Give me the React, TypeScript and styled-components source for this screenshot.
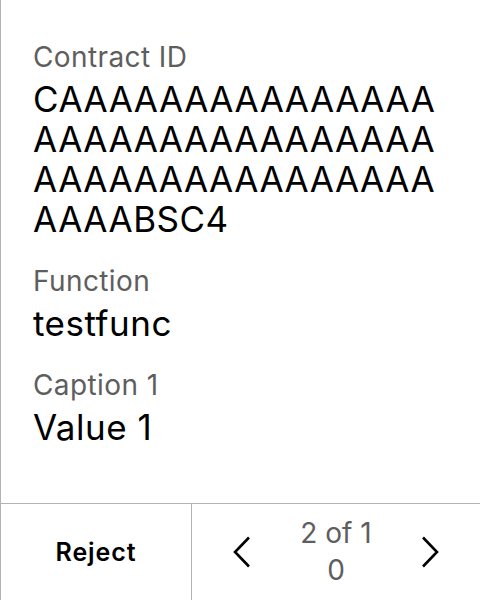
import React from "react";
import styled, { createGlobalStyle } from "styled-components";

const Global = createGlobalStyle`
  html, body { margin: 0; padding: 0; background: #ffffff; }
  body { font-family: Inter, "Noto Sans", sans-serif; }
`;

const Screen = styled.div`
  box-sizing: border-box;
  width: 480px;
  height: 600px;
  border-left: 1px solid #b3b3b3;
  display: flex;
  flex-direction: column;
  background: #ffffff;
`;

const Content = styled.div`
  flex: 1;
  padding: 40px 32px 0 32px;
  display: flex;
  flex-direction: column;
  gap: 25px;
`;

const Field = styled.div`
  display: flex;
  flex-direction: column;
  gap: 5px;
`;

const Label = styled.div`
  font-size: 28px;
  line-height: 34px;
  letter-spacing: 0.4px;
  color: #5e5e5e;
`;

const Value = styled.div`
  font-size: 35px;
  line-height: 40px;
  letter-spacing: 0.5px;
  color: #000000;
  word-break: break-all;
`;

const Footer = styled.div`
  height: 96px;
  border-top: 1px solid #b3b3b3;
  display: grid;
  grid-template-columns: 191px 1fr;
`;

const RejectButton = styled.button`
  border: none;
  background: transparent;
  border-right: 1px solid #b3b3b3;
  font-family: Inter, "Noto Sans", sans-serif;
  font-weight: 600;
  font-size: 25px;
  letter-spacing: 0.9px;
  color: #000;
  padding: 0;
`;

const Pager = styled.div`
  display: flex;
  align-items: center;
  justify-content: space-between;
  padding: 0 26px;
`;

const Arrow = styled.button`
  width: 48px;
  height: 48px;
  border: none;
  background: transparent;
  padding: 0;
  display: flex;
  align-items: center;
  justify-content: center;
`;

const Count = styled.div`
  width: 80px;
  text-align: center;
  font-size: 28px;
  line-height: 37px;
  color: #5e5e5e;
  word-break: break-all;
`;

const Chevron = ({ dir }: { dir: "left" | "right" }) => (
  <svg width="20" height="32" viewBox="0 0 20 32" fill="none">
    <path
      d={dir === "left" ? "M17 1.5 L3 16 L17 30.5" : "M3 1.5 L17 16 L3 30.5"}
      stroke="#000"
      strokeWidth="2.6"
    />
  </svg>
);

const fields = [
  { label: "Contract ID", value: "CAAAAAAAAAAAAAAAAAAAAAAAAAAAAAAAAAAAAAAAAAAAAAAAAAAABSC4" },
  { label: "Function", value: "testfunc" },
  { label: "Caption 1", value: "Value 1" },
];

export default function App() {
  return (
    <>
      <Global />
      <Screen>
        <Content>
          {fields.map((f) => (
            <Field key={f.label}>
              <Label>{f.label}</Label>
              <Value>{f.value}</Value>
            </Field>
          ))}
        </Content>
        <Footer>
          <RejectButton>Reject</RejectButton>
          <Pager>
            <Arrow aria-label="Previous">
              <Chevron dir="left" />
            </Arrow>
            <Count>2 of 10</Count>
            <Arrow aria-label="Next">
              <Chevron dir="right" />
            </Arrow>
          </Pager>
        </Footer>
      </Screen>
    </>
  );
}
